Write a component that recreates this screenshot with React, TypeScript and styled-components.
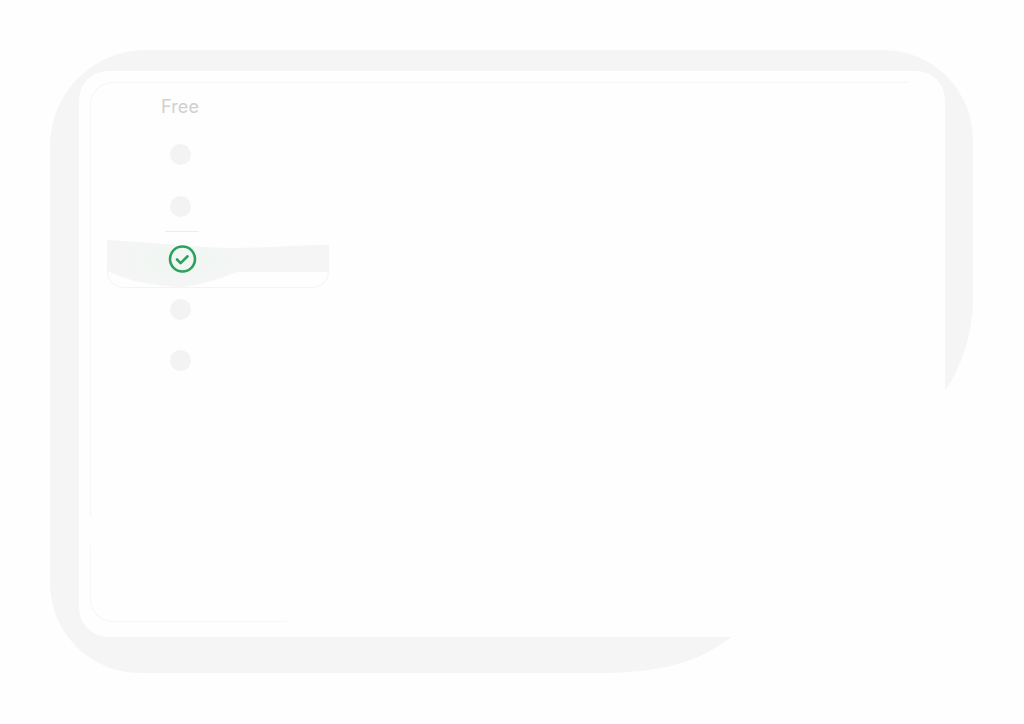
import React from "react";
import styled, { createGlobalStyle } from "styled-components";

const Global = createGlobalStyle`
  html, body { margin: 0; padding: 0; background: #fefefe; }
  body { font-family: Inter, "Liberation Sans", sans-serif; }
`;

const Page = styled.main`
  width: 1024px;
  height: 724px;
  box-sizing: border-box;
  padding: 50px 51px 51px 50px;
  overflow: hidden;
`;

const Frame = styled.section`
  box-sizing: border-box;
  width: 923px;
  height: 623px;
  padding: 21px 28px 36px 29px;
  background: #f5f5f5;
  border-radius: 96px 90px 90px 90px;
  clip-path: path("M0 0H923V247C923 285 911 316 897 338L680 588C655 606 625 623 550 623H0Z");
`;

const Card = styled.div`
  box-sizing: border-box;
  height: 100%;
  padding: 11px 0 15px 11px;
  background: #fefefe;
  border-radius: 29px;
`;

const Panel = styled.div`
  box-sizing: border-box;
  width: 818px;
  height: 100%;
  padding: 0 0 0 16px;
  border: 1px solid #f6f6f6;
  border-right: 0;
  border-radius: 23px 0 0 23px;
  clip-path: polygon(
    0 0, 100% 0, 100% 50%, 195px 100%, 0 100%,
    0 463px, 2px 463px, 2px 435px, 0 435px
  );
`;

const PlanColumn = styled.div`
  display: flex;
  flex-direction: column;
  width: 222px;
`;

const PlanTitle = styled.h2`
  width: 146px;
  height: 46px;
  margin: 0;
  display: flex;
  align-items: center;
  justify-content: center;
  font-size: 18px;
  font-weight: 400;
  letter-spacing: 0.1px;
  color: #d0d0d0;
`;

const Row = styled.div<{ $height: number }>`
  position: relative;
  width: 222px;
  height: ${(p) => p.$height}px;
  display: flex;
  align-items: center;
`;

const Cell = styled.div<{ $shift?: number }>`
  position: relative;
  width: 146px;
  display: flex;
  justify-content: center;
  padding-left: ${(p) => p.$shift ?? 0}px;
  box-sizing: border-box;
`;

const Dot = styled.span`
  width: 21px;
  height: 21px;
  border-radius: 50%;
  background: #f3f3f3;
`;

const Divider = styled.span`
  position: absolute;
  left: 58px;
  bottom: 0;
  width: 34px;
  height: 1px;
  background: #ececec;
`;

const Wash = styled.span`
  position: absolute;
  left: 0;
  right: 0;
  top: 0;
  bottom: -2px;
  clip-path: path("M0 8C40 10 90 16 126 16C160 16 190 13 222 13V40H130C115 46 90 55 70 55C45 53 15 48 0 38Z");
  background:
    radial-gradient(ellipse 70px 28px at 72px 28px, #f1f6f3 0%, #f3f6f4 60%, transparent 100%),
    #f5f5f5;
`;

const WashEdge = styled.span`
  position: absolute;
  box-sizing: border-box;
  left: 0;
  right: 0;
  top: 0;
  bottom: -2px;
  border: 1px solid #f4f4f4;
  border-radius: 16px;
  clip-path: inset(36px 0 0 0);
`;

const CheckIcon = styled.svg`
  display: block;
  width: 29px;
  height: 29px;
  fill: none;
  stroke: #2ba25e;
  stroke-width: 2.6;
  stroke-linecap: round;
  stroke-linejoin: round;
`;

export default function App() {
  return (
    <Page>
      <Global />
      <Frame>
        <Card>
          <Panel>
            <PlanColumn>
              <PlanTitle>Free</PlanTitle>
              <Row $height={51}>
                <Cell>
                  <Dot />
                </Cell>
              </Row>
              <Row $height={52}>
                <Cell>
                  <Dot />
                </Cell>
                <Divider />
              </Row>
              <Row $height={54}>
                <Wash />
                <WashEdge />
                <Cell $shift={4}>
                  <CheckIcon viewBox="0 0 29 29">
                    <circle cx="14.5" cy="14" r="12.5" />
                    <path d="M9 14.5l3.6 3.6 7-6.8" />
                  </CheckIcon>
                </Cell>
              </Row>
              <Row $height={46}>
                <Cell>
                  <Dot />
                </Cell>
              </Row>
              <Row $height={56}>
                <Cell>
                  <Dot />
                </Cell>
              </Row>
            </PlanColumn>
          </Panel>
        </Card>
      </Frame>
    </Page>
  );
}
